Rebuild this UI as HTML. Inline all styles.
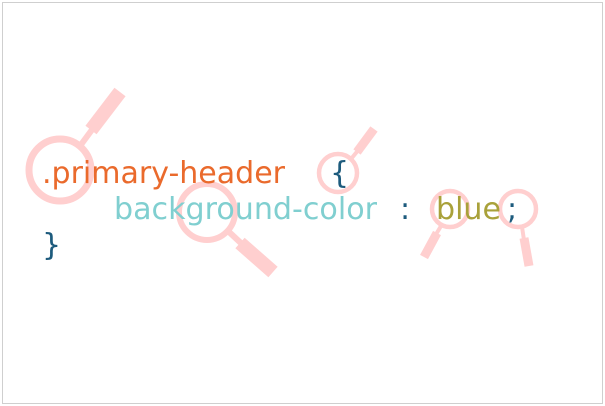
<!DOCTYPE html>
<html><head><style>
html,body{margin:0;padding:0;background:#fff;}
svg{display:block}
text{font-family:"DejaVu Sans","Liberation Sans",sans-serif;font-size:30px;}
</style></head><body>
<svg width="605" height="406" viewBox="0 0 605 406">
<rect x="2.5" y="2.5" width="600" height="401" fill="#fff" stroke="#cfcfcf" stroke-width="1"/>
<g stroke="#ffcfcf" fill="none" stroke-linecap="butt">
  <circle cx="60" cy="170" r="31" stroke-width="7"/>
  <line x1="80" y1="146" x2="94" y2="127" stroke-width="6"/>
  <line x1="91" y1="130" x2="120" y2="92" stroke-width="14"/>
  <circle cx="207" cy="212" r="28" stroke-width="6"/>
  <line x1="228" y1="231" x2="243" y2="245" stroke-width="6"/>
  <line x1="240" y1="243" x2="273" y2="272" stroke-width="14"/>
  <circle cx="338" cy="173" r="19" stroke-width="4.5"/>
  <line x1="351" y1="159" x2="360" y2="148" stroke-width="4"/>
  <line x1="357" y1="152" x2="374" y2="129" stroke-width="9"/>
  <circle cx="450" cy="209" r="18" stroke-width="4.5"/>
  <line x1="441" y1="226" x2="435" y2="236" stroke-width="4"/>
  <line x1="437" y1="233" x2="424" y2="257" stroke-width="9"/>
  <circle cx="518" cy="209" r="18" stroke-width="4.5"/>
  <line x1="522" y1="227" x2="524" y2="240" stroke-width="4"/>
  <line x1="524" y1="238" x2="529" y2="266" stroke-width="9"/>
</g>
<text x="42" y="183" fill="#ea6a2c" textLength="243" lengthAdjust="spacingAndGlyphs">.primary-header</text>
<text x="330" y="183" fill="#1d5b7d">{</text>
<text x="114" y="219" fill="#80cfd0" textLength="263" lengthAdjust="spacingAndGlyphs">background-color</text>
<text x="400" y="219" fill="#1d5b7d">:</text>
<text x="436" y="219" fill="#a9a13a" textLength="65" lengthAdjust="spacingAndGlyphs">blue</text>
<text x="507" y="219" fill="#1d5b7d">;</text>
<text x="42" y="255" fill="#1d5b7d">}</text>
</svg>
</body></html>
